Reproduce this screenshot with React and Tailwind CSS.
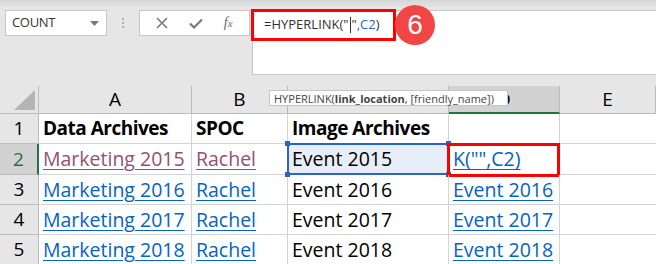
import React from 'react';

const rows = [
  { n: 1, a: 'Data Archives', b: 'SPOC', c: 'Image Archives', d: '', head: true },
  { n: 2, a: 'Marketing 2015', b: 'Rachel', c: 'Event 2015', d: 'K("",C2)', visited: true },
  { n: 3, a: 'Marketing 2016', b: 'Rachel', c: 'Event 2016', d: 'Event 2016' },
  { n: 4, a: 'Marketing 2017', b: 'Rachel', c: 'Event 2017', d: 'Event 2017' },
  { n: 5, a: 'Marketing 2018', b: 'Rachel', c: 'Event 2018', d: 'Event 2018' },
];

const Handle = ({ pos }) => (
  <span className={`absolute w-[5px] h-[5px] bg-[#2b65c2] ${pos}`} />
);

const App = () => {
  return (
    <div className="w-[656px] h-[264px] overflow-hidden bg-[#e6e6e6] font-['Open_Sans',sans-serif] text-black">
      {/* Formula bar area */}
      <div className="relative h-[86px] bg-linear-to-b from-[#d6d6d6] via-[#e6e6e6] to-[#e6e6e6] via-[10%]">
        <div className="flex items-start pt-[10px] pl-[5px]">
          <div className="w-[102px] h-[26px] bg-white border border-[#c6c6c6] flex items-center justify-between pl-[6px] pr-[7px]">
            <span className="text-[13px] text-[#333] tracking-tight">COUNT</span>
            <svg width="9" height="5" viewBox="0 0 9 5"><path d="M0 0h9L4.5 5z" fill="#7a7a7a" /></svg>
          </div>
          <div className="w-[32px] h-[26px] flex flex-col items-center justify-center gap-[2px]">
            <span className="w-[2px] h-[2px] bg-[#b0b0b0]" />
            <span className="w-[2px] h-[2px] bg-[#b0b0b0]" />
            <span className="w-[2px] h-[2px] bg-[#b0b0b0]" />
          </div>
          <div className="w-[111px] h-[26px] bg-white border border-[#c6c6c6] flex items-center justify-around px-[6px]">
            <svg width="12" height="12" viewBox="0 0 12 12"><path d="M1 1l10 10M11 1L1 11" stroke="#7a7a7a" strokeWidth="1.6" /></svg>
            <svg width="14" height="11" viewBox="0 0 14 11"><path d="M1 5.5l4 4L13 1.5" stroke="#7a7a7a" strokeWidth="2.2" fill="none" /></svg>
            <span className="text-[14px] italic text-[#6a6a6a] font-['Liberation_Serif',serif] leading-none">
              f<span className="text-[11px]">x</span>
            </span>
          </div>
          <div className="ml-[2px] flex-1 h-[65px] bg-white border-t border-l border-b border-[#c6c6c6] flex items-start">
            <div className="-ml-[2px] -mt-[2px] w-[145px] h-[32px] border-[3px] border-[#ff0000] flex items-center pl-[10px] text-[13px] text-[#333]">
              <span>=HYPERLINK("</span>
              <span className="inline-block w-px h-[16px] bg-[#333] mx-[1px]" />
              <span>"</span>
              <span className="text-[#2f63c6]">,C2</span>
              <span>)</span>
            </div>
          </div>
        </div>
        {/* step badge */}
        <div className="absolute left-[395px] top-[5px] w-[40px] h-[40px] rounded-full bg-[#f04646] flex items-center justify-center text-white text-[28px] font-['Liberation_Sans',sans-serif] leading-none">
          6
        </div>
      </div>

      {/* Grid */}
      <div className="relative grid grid-cols-[39px_153px_96px_161px_111px_96px] grid-rows-[28px_30px_31px_30px_30px_30px] bg-white">
        {/* column headers */}
        <div className="bg-[#e6e6e6] border-r border-b border-[#bcbcbc] flex items-end justify-end pr-[3px] pb-[3px]">
          <svg width="21" height="20" viewBox="0 0 21 20"><path d="M21 0v20H0z" fill="#b4b4b4" /></svg>
        </div>
        {['A', 'B', 'C', 'D', 'E'].map((l) => (
          <div
            key={l}
            className={`flex items-center justify-center text-[19px] border-r ${
              l === 'D'
                ? 'bg-[#d2d2d2] border-b-2 border-b-[#217346] border-r-[#bcbcbc]'
                : 'bg-[#e6e6e6] border-b border-[#bcbcbc]'
            }`}
          >
            {l}
          </div>
        ))}

        {rows.map((r) => (
          <React.Fragment key={r.n}>
            <div
              className={`flex items-center justify-center text-[19px] border-b border-[#bcbcbc] ${
                r.n === 2
                  ? 'bg-[#d2d2d2] text-[#217346] border-r-2 border-r-[#217346]'
                  : 'bg-[#e6e6e6] border-r'
              }`}
            >
              {r.n}
            </div>
            {[r.a, r.b].map((t, i) => (
              <div key={i} className="border-r border-b border-[#d4d4d4] flex items-center pl-[4px] text-[19.5px] whitespace-nowrap overflow-hidden">
                {r.head ? (
                  <span className="font-bold text-[19px] tracking-[-0.5px]">{t}</span>
                ) : (
                  <span className={`underline underline-offset-[3px] ${r.visited ? 'text-[#954f72]' : 'text-[#0563c1]'}`}>{t}</span>
                )}
              </div>
            ))}
            <div
              className={`relative border-r border-b border-[#d4d4d4] flex items-center pl-[4px] text-[19.5px] whitespace-nowrap ${
                r.n === 2 ? 'bg-[#e8eef8]' : ''
              }`}
            >
              <span className={r.head ? 'font-bold text-[19px] tracking-[-0.5px]' : ''}>{r.c}</span>
              {r.n === 2 && (
                <>
                  <span className="absolute -left-px -top-px -right-px -bottom-px border-2 border-[#2b65c2]" />
                  <Handle pos="-left-[3px] -top-[3px]" />
                  <Handle pos="-left-[3px] -bottom-[3px]" />
                  <Handle pos="-right-[3px] -top-[3px]" />
                  <Handle pos="-right-[3px] -bottom-[3px]" />
                </>
              )}
            </div>
            <div className="relative border-r border-b border-[#d4d4d4] flex items-center pl-[4px] text-[19.5px] whitespace-nowrap">
              {r.d && <span className="underline underline-offset-[3px] text-[#0563c1]">{r.d}</span>}
              {r.n === 2 && (
                <span className="absolute -left-[2px] -top-px -right-[1px] -bottom-[3px] border-[3px] border-[#ff0000]" />
              )}
            </div>
            <div className="border-b border-[#d4d4d4]" />
          </React.Fragment>
        ))}

        {/* function tooltip */}
        <div className="absolute left-[269px] top-[4px] w-[239px] h-[16px] bg-white border border-[#c6c6c6] flex items-center pl-[4px] text-[11px] text-[#444] whitespace-nowrap leading-none">
          HYPERLINK(<b>link_location</b>, [friendly_name])
        </div>
      </div>
    </div>
  );
};

export default App;
